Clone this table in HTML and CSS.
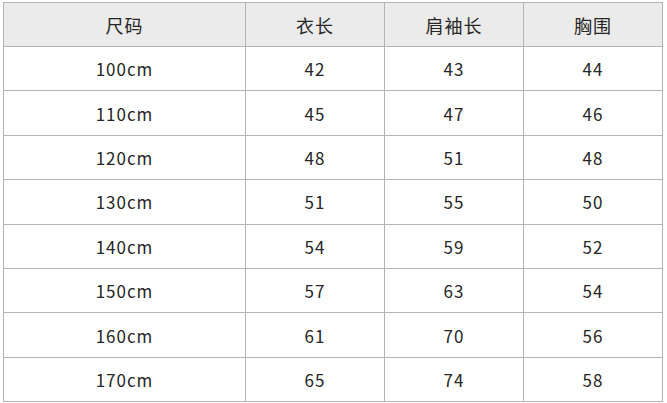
FILE: index.html
```html
<!DOCTYPE html>
<html lang="zh">
<head>
<meta charset="utf-8">
<link rel="stylesheet" href="styles.css">
</head>
<body>
<div class="wrap">
<table class="size-table">
<thead>
<tr><th class="c1">尺码</th><th class="c2">衣长</th><th class="c3">肩袖长</th><th class="c4">胸围</th></tr>
</thead>
<tbody>
<tr><td>100cm</td><td>42</td><td>43</td><td>44</td></tr>
<tr><td>110cm</td><td>45</td><td>47</td><td>46</td></tr>
<tr><td>120cm</td><td>48</td><td>51</td><td>48</td></tr>
<tr><td>130cm</td><td>51</td><td>55</td><td>50</td></tr>
<tr><td>140cm</td><td>54</td><td>59</td><td>52</td></tr>
<tr><td>150cm</td><td>57</td><td>63</td><td>54</td></tr>
<tr><td>160cm</td><td>61</td><td>70</td><td>56</td></tr>
<tr><td>170cm</td><td>65</td><td>74</td><td>58</td></tr>
</tbody>
</table>
</div>
</body>
</html>
```

FILE: styles.css
```css
html, body {
  margin: 0;
  padding: 0;
  background: #ffffff;
}
.wrap {
  padding: 2px 0 0 3px;
}
.size-table {
  border-collapse: collapse;
  table-layout: fixed;
  width: 659px;
  font-family: "Noto Sans CJK SC", "Noto Sans", sans-serif;
  color: #262626;
}
.size-table th,
.size-table td {
  border: 1px solid #b4b4b4;
  text-align: center;
  padding: 0;
  box-sizing: border-box;
}
.size-table th {
  background: #ebebeb;
  font-weight: normal;
  font-size: 18px;
  letter-spacing: 1px;
  height: 44px;
}
.size-table td {
  font-size: 17px;
  letter-spacing: 1px;
  height: 44.4px;
}
.c1 { width: 242px; }
.c2 { width: 139px; }
.c3 { width: 139px; }
.c4 { width: 139px; }
```
